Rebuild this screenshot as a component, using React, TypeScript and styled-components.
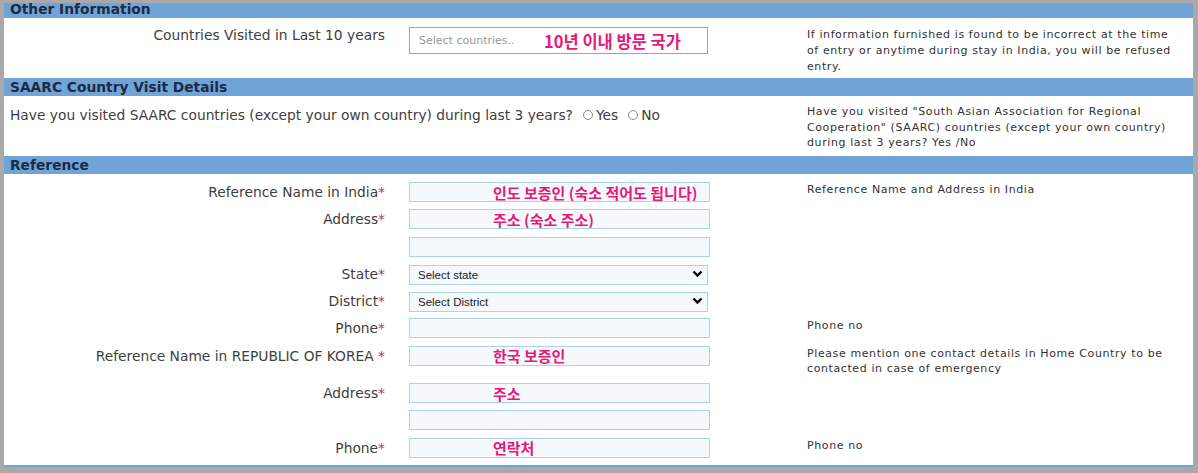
import React from "react";
import styled, { createGlobalStyle } from "styled-components";

const GRAY = "#a9a9a9";
const BAR = "#70a4d6";
const PINK = "#e8187b";

const GlobalStyle = createGlobalStyle`
  html, body {
    margin: 0;
    padding: 0;
    background: ${GRAY};
  }
  body {
    font-family: "DejaVu Sans", Verdana, sans-serif;
    color: #404040;
  }
`;

const Frame = styled.div`
  box-sizing: border-box;
  width: 1198px;
  height: 473px;
  border-style: solid;
  border-color: ${GRAY};
  border-width: 3px 5px 6px 4px;
  background: #fff;
  overflow: hidden;
`;

const Heading = styled.div<{ $first?: boolean }>`
  height: 18px;
  margin-top: ${(p) => (p.$first ? -3 : 0)}px;
  padding-left: 6px;
  background: ${BAR};
  color: #1c2b47;
  font-weight: bold;
  font-size: 13.8px;
  line-height: 18px;
`;

const Row = styled.div<{ $pt: number; $pb: number; $h?: number }>`
  box-sizing: border-box;
  display: grid;
  grid-template-columns: 391px 400px 1fr;
  align-items: start;
  min-height: ${(p) => (p.$h ? `${p.$h}px` : "0")};
  padding-top: ${(p) => p.$pt}px;
  padding-bottom: ${(p) => p.$pb}px;
`;

const Label = styled.div<{ $lh?: number }>`
  text-align: right;
  padding-right: 10px;
  font-size: 13.8px;
  line-height: ${(p) => p.$lh ?? 20}px;
  white-space: nowrap;
`;

const Question = styled.div`
  grid-column: 1 / span 2;
  display: flex;
  align-items: center;
  padding: 3px 0 0 6px;
  font-size: 13.8px;
  line-height: 16px;
  white-space: nowrap;
`;

const Star = styled.span`
  color: #b8336a;
`;

const Field = styled.div`
  padding-left: 14px;
`;

const Help = styled.div<{ $lh?: number }>`
  padding: 0 22px 0 12px;
  font-size: 11px;
  letter-spacing: 0.6px;
  line-height: ${(p) => p.$lh ?? 15}px;
  color: #333;
`;

const RefBody = styled.div`
  padding: 4px 0 4px;
`;

const Multi = styled.div`
  box-sizing: border-box;
  width: 299px;
  height: 27px;
  border: 1px solid #a3a3a3;
  background: #fff;
  display: flex;
  align-items: center;
  padding-left: 9px;
`;

const Placeholder = styled.span`
  font-size: 11px;
  color: #9a9a9a;
  width: 125px;
`;

const Note = styled.span`
  font-family: "Noto Sans CJK KR", sans-serif;
  font-weight: bold;
  font-size: 16.5px;
  color: ${PINK};
`;

const TextInput = styled.input`
  box-sizing: border-box;
  display: block;
  width: 301px;
  height: 20px;
  margin: 0;
  padding: 0 0 0 83px;
  border: 1px solid #acd3ea;
  background: #f5f9fc;
  font-family: "Noto Sans CJK KR", sans-serif;
  font-weight: bold;
  font-size: 15px;
  color: ${PINK};
  outline: none;
`;

const SelectWrap = styled.div`
  position: relative;
  width: 299px;
  height: 20px;
`;

const Select = styled.select`
  box-sizing: border-box;
  appearance: none;
  width: 100%;
  height: 20px;
  margin: 0;
  padding: 0 0 0 8px;
  border: 1px solid #acd3ea;
  border-radius: 0;
  background: #f5f9fc;
  font-family: "Liberation Sans", Arial, sans-serif;
  font-size: 11.5px;
  color: #222;
  outline: none;
`;

const Chevron = styled.svg`
  position: absolute;
  right: 5px;
  top: 6px;
  pointer-events: none;
`;

const Radio = styled.input`
  appearance: none;
  box-sizing: border-box;
  width: 10px;
  height: 10px;
  margin: 0 3px 0 10px;
  border: 1px solid #8a8a8a;
  border-radius: 50%;
  background: #fff;
`;

const RadioText = styled.span`
  font-size: 13.8px;
`;

const DropSelect = ({ text }: { text: string }) => (
  <SelectWrap>
    <Select defaultValue="">
      <option value="">{text}</option>
    </Select>
    <Chevron width="11" height="8" viewBox="0 0 11 8">
      <path d="M1.5 1.5 L5.5 5.5 L9.5 1.5" fill="none" stroke="#000" strokeWidth="2.4" />
    </Chevron>
  </SelectWrap>
);

type RefRow = {
  label: string;
  gap?: boolean;
  kind?: "select";
  value?: string;
  help?: string;
  required?: boolean;
};

const rows: RefRow[] = [
  { label: "Reference Name in India", required: true, value: "인도 보증인 (숙소 적어도 됩니다)", help: "Reference Name and Address in India" },
  { label: "Address", required: true, value: "주소 (숙소 주소)" },
  { label: "" },
  { label: "State", required: true, kind: "select", value: "Select state" },
  { label: "District", required: true, kind: "select", value: "Select District" },
  { label: "Phone", required: true, help: "Phone no" },
  {
    label: "Reference Name in REPUBLIC OF KOREA",
    gap: true,
    required: true,
    value: "한국 보증인",
    help: "Please mention one contact details in Home Country to be contacted in case of emergency",
  },
  { label: "Address", required: true, value: "주소" },
  { label: "" },
  { label: "Phone", required: true, value: "연락처", help: "Phone no" },
];

export default function App() {
  return (
    <>
      <GlobalStyle />
      <Frame>
        <Heading $first>Other Information</Heading>
        <Row $pt={9} $pb={3} $h={60}>
          <Label $lh={16}>Countries Visited in Last 10 years</Label>
          <Field>
            <Multi>
              <Placeholder>Select countries..</Placeholder>
              <Note>10년 이내 방문 국가</Note>
            </Multi>
          </Field>
          <Help $lh={16}>
            If information furnished is found to be incorrect at the time of entry or anytime during stay in India, you
            will be refused entry.
          </Help>
        </Row>

        <Heading>SAARC Country Visit Details</Heading>
        <Row $pt={8} $pb={5} $h={60}>
          <Question>
            Have you visited SAARC countries (except your own country) during last 3 years?
            <Radio type="radio" name="saarc" />
            <RadioText>Yes</RadioText>
            <Radio type="radio" name="saarc" />
            <RadioText>No</RadioText>
          </Question>
          <Help $lh={15.5}>
            Have you visited "South Asian Association for Regional Cooperation" (SAARC) countries (except your own
            country) during last 3 years? Yes /No
          </Help>
        </Row>

        <Heading>Reference</Heading>
        <RefBody>
          {rows.map((r, i) => (
            <Row key={i} $pt={4} $pb={3.3}>
              <Label>
                {r.label}
                {r.required && <Star>{r.gap ? " *" : "*"}</Star>}
              </Label>
              <Field>
                {r.kind === "select" ? (
                  <DropSelect text={r.value ?? ""} />
                ) : (
                  <TextInput defaultValue={r.value ?? ""} />
                )}
              </Field>
              {r.help ? <Help>{r.help}</Help> : <div />}
            </Row>
          ))}
        </RefBody>
        <Heading />
      </Frame>
    </>
  );
}
